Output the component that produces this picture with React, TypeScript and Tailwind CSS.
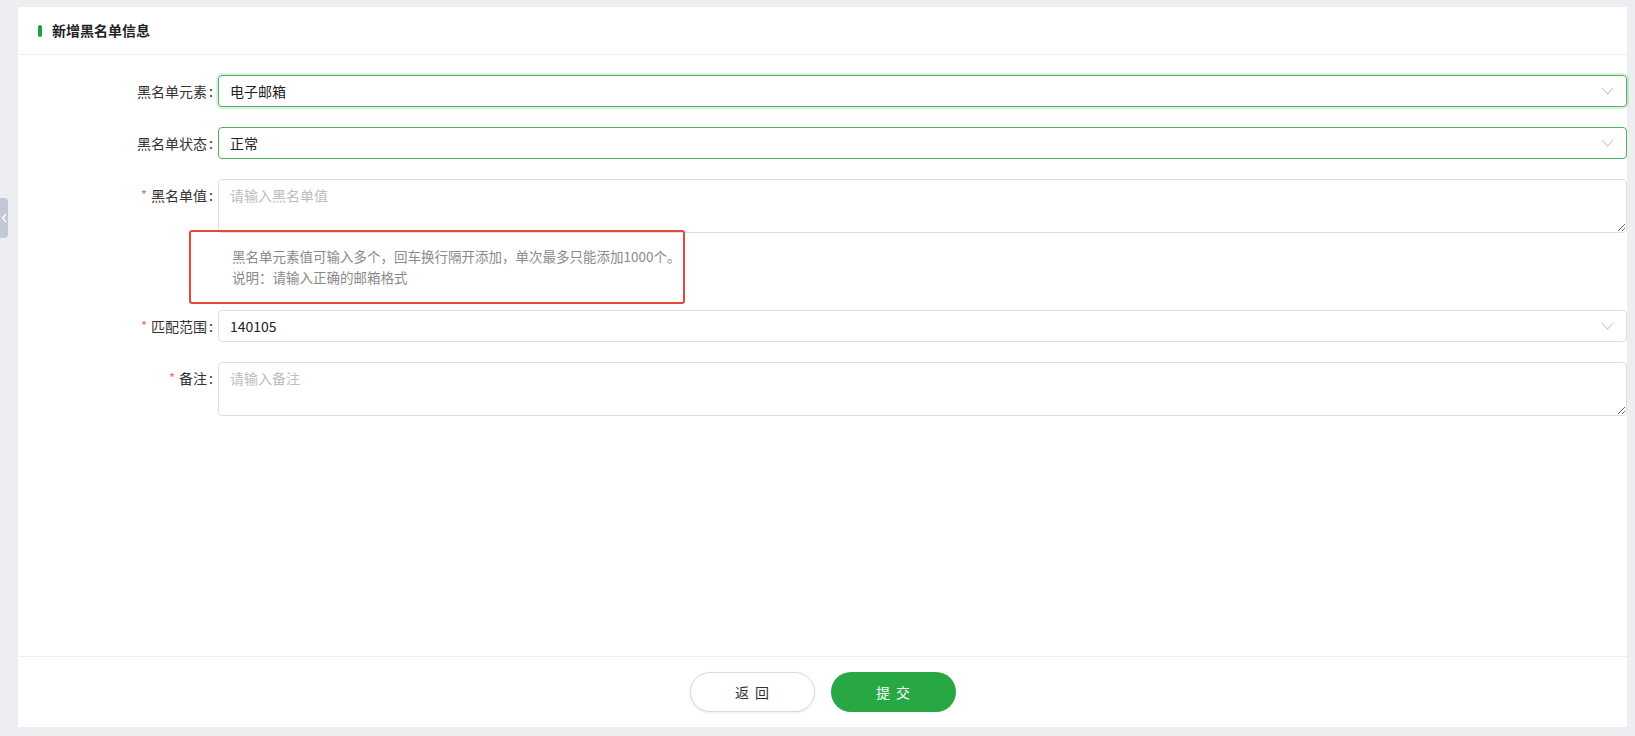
import React from "react";

const font = { fontFamily: '"Noto Sans CJK SC", "Noto Sans", sans-serif' };

function Chevron() {
  return (
    <svg width="13" height="8" viewBox="0 0 13 8" fill="none" className="shrink-0">
      <path d="M1 1l5.5 6L12 1" stroke="#c0c4cc" strokeWidth="1.1" />
    </svg>
  );
}

function Label({ text, required }: { text: string; required?: boolean }) {
  return (
    <div className="w-[200px] shrink-0 pr-[5px] h-8 flex items-center justify-end text-[14px] text-[#333]">
      {required && <span className="text-[#f56c6c] mr-[4px] text-[13px]">*</span>}
      <span>{text}</span>
      <span className="ml-[2px]">:</span>
    </div>
  );
}

function SelectBox({ value, focused, active }: { value: string; focused?: boolean; active?: boolean }) {
  const border = active ? "border-[#4db35a]" : "border-[#dcdfe6]";
  const ring = focused ? "shadow-[0_0_0_2px_rgba(77,179,90,0.2)]" : "";
  return (
    <div
      className={`flex-1 h-8 rounded-[4px] border ${border} ${ring} flex items-center justify-between pl-[11px] pr-[12px] text-[14px] text-[#222]`}
    >
      <span>{value}</span>
      <Chevron />
    </div>
  );
}

function Area({ placeholder }: { placeholder: string }) {
  return (
    <textarea
      placeholder={placeholder}
      style={font}
      className="flex-1 h-[54px] rounded-[4px] border border-[#dcdfe6] px-[11px] pt-[4px] text-[14px] leading-[22px] text-[#333] placeholder:text-[#bdbdbd] outline-none resize-y"
    />
  );
}

export default function App() {
  return (
    <div style={font} className="w-[1635px] h-[736px] bg-[#eceef2] pt-[7px] pl-[18px] pr-[8px] pb-[9px]">
      <div className="relative h-full bg-white flex flex-col">
        <div className="h-[48px] shrink-0 border-b border-[#eeeeee] flex items-center pl-[20px]">
          <span className="w-[4px] h-[12px] rounded-full bg-[#1e9e45] mr-[10px]" />
          <span className="text-[14px] font-bold text-[#222]">新增黑名单信息</span>
        </div>

        <div className="flex-1 pt-[20px] flex flex-col">
          <div className="flex">
            <Label text="黑名单元素" />
            <SelectBox value="电子邮箱" active focused />
          </div>
          <div className="flex mt-[20px]">
            <Label text="黑名单状态" />
            <SelectBox value="正常" active />
          </div>
          <div className="flex mt-[20px]">
            <Label text="黑名单值" required />
            <Area placeholder="请输入黑名单值" />
          </div>
          <div className="ml-[171px] mt-[-3px] w-[496px] h-[74px] border-2 border-[#e8453c] rounded-[3px] pl-[41px] pt-[14px] text-[13.5px] leading-[21px] text-[#8a8a8a]">
            <div>黑名单元素值可输入多个，回车换行隔开添加，单次最多只能添加1000个。</div>
            <div>说明：请输入正确的邮箱格式</div>
          </div>
          <div className="flex mt-[6px]">
            <Label text="匹配范围" required />
            <SelectBox value="140105" />
          </div>
          <div className="flex mt-[20px]">
            <Label text="备注" required />
            <Area placeholder="请输入备注" />
          </div>
        </div>

        <div className="h-[71px] shrink-0 border-t border-[#eeeeee] flex items-center justify-center gap-[16px]">
          <button className="w-[125px] h-[40px] rounded-full border border-[#d9d9d9] bg-white shadow-[0_1px_3px_rgba(0,0,0,0.08)] text-[14px] text-[#333] tracking-[6px] pl-[6px]">
            返回
          </button>
          <button className="w-[125px] h-[40px] rounded-full bg-[#28a745] text-white text-[14px] tracking-[6px] pl-[6px]">
            提交
          </button>
        </div>
      </div>

      <div className="absolute left-0 top-[198px] w-[8px] h-[40px] rounded-r-[4px] bg-[#c3c8d6] flex items-center justify-center">
        <svg width="6" height="10" viewBox="0 0 6 10" fill="none">
          <path d="M5 1L1.5 5 5 9" stroke="#fff" strokeWidth="1.4" />
        </svg>
      </div>
    </div>
  );
}
